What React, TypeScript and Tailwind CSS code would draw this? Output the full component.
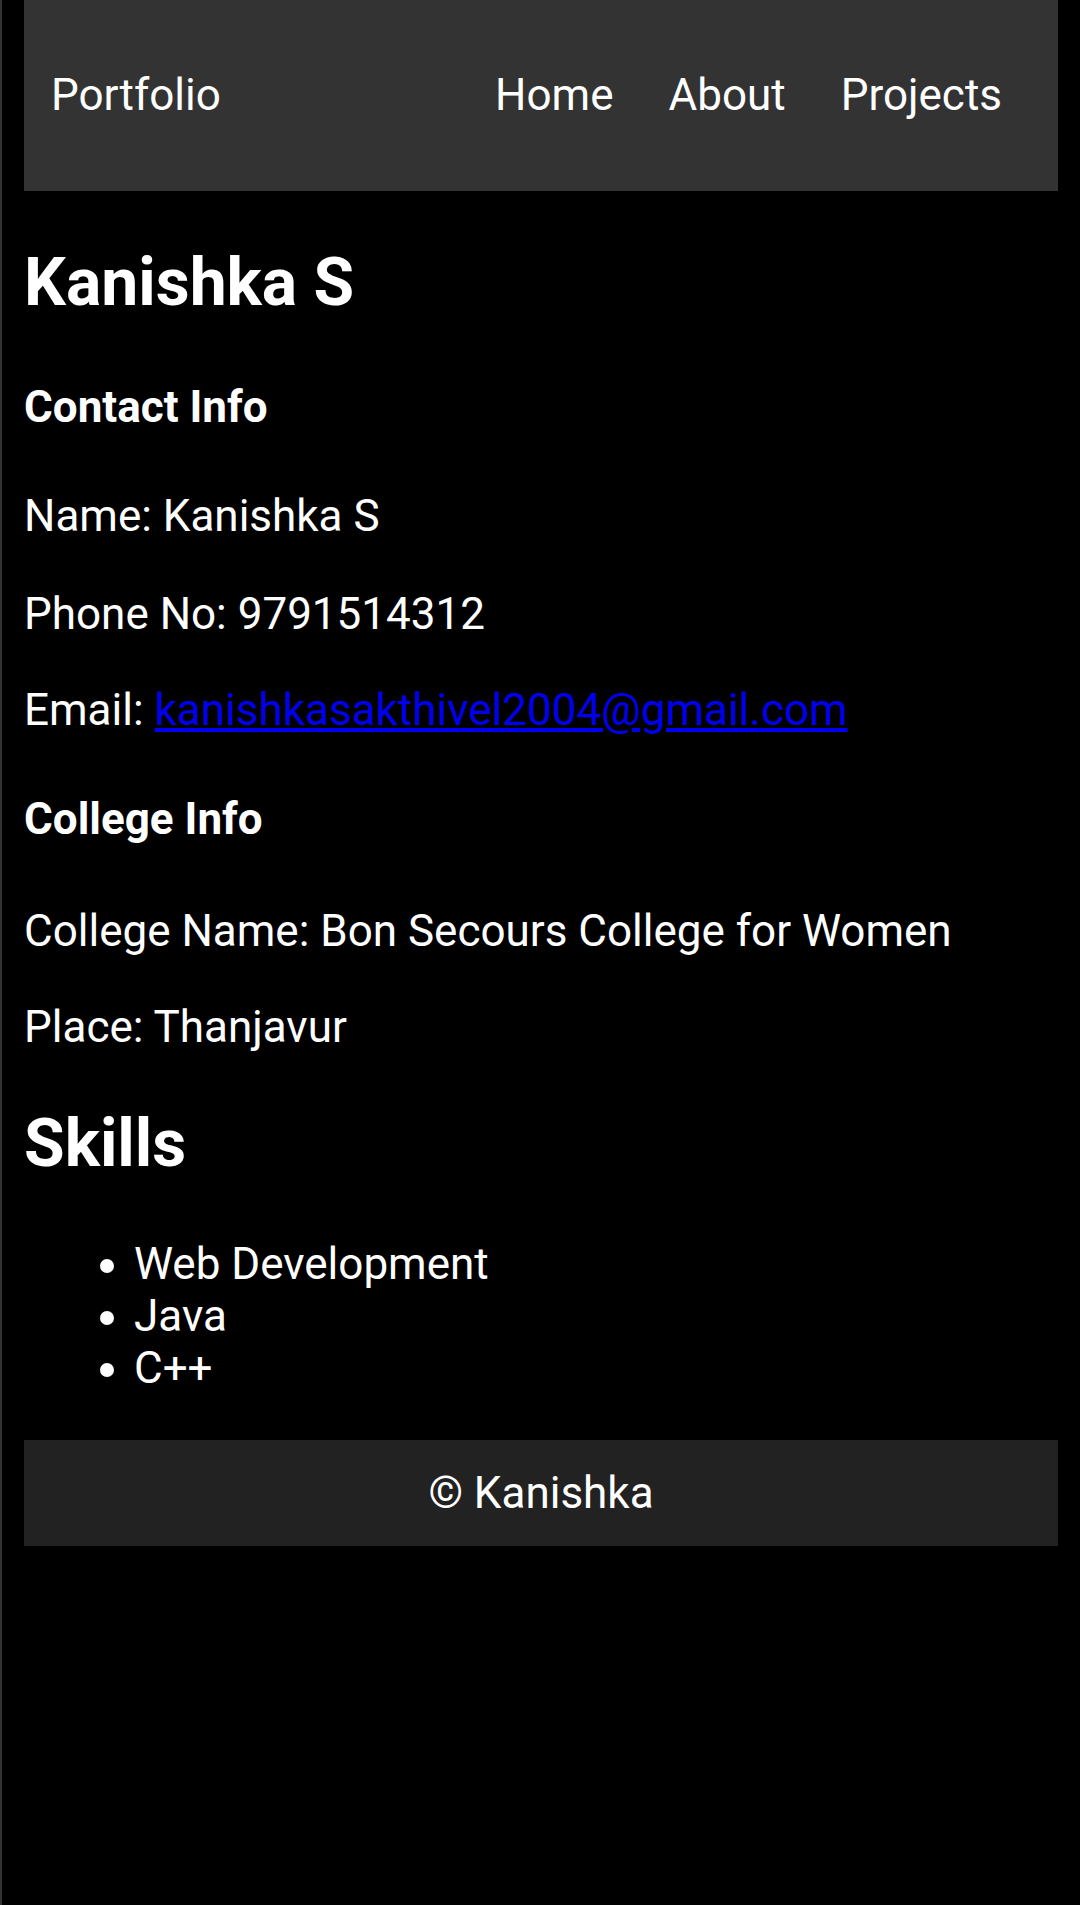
import React from "react";

const skills = ["Web Development", "Java", "C++"];

export default function App() {
  return (
    <div className="min-h-[1905px] bg-black text-white border-l-2 border-[#333333] px-[22px] font-['Roboto','Noto_Sans',sans-serif] text-[44px] leading-[52px]">
      <nav className="h-[191px] bg-[#333333] flex items-center justify-between pl-[27px] pr-[56px] pb-[2px]">
        <a href="#" className="text-white">
          Portfolio
        </a>
        <div className="flex gap-[55px]">
          <a href="#" className="text-white">Home</a>
          <a href="#" className="text-white">About</a>
          <a href="#" className="text-white">Projects</a>
        </div>
      </nav>

      <h2 className="mt-[53px] text-[66px] font-bold leading-[77px]">Kanishka S</h2>

      <h4 className="mt-[60px] font-bold">Contact Info</h4>
      <p className="mt-[57px]">Name: Kanishka S</p>
      <p className="mt-[46px]">Phone No: 9791514312</p>
      <p className="mt-[44px]">
        Email:{" "}
        <a href="mailto:kanishkasakthivel2004@gmail.com" className="text-[#0000ee] underline">
          kanishkasakthivel2004@gmail.com
        </a>
      </p>

      <h4 className="mt-[57px] font-bold">College Info</h4>
      <p className="mt-[60px]">College Name: Bon Secours College for Women</p>
      <p className="mt-[44px]">Place: Thanjavur</p>

      <h2 className="mt-[52px] text-[66px] font-bold leading-[77px]">Skills</h2>
      <ul className="mt-[56px] list-disc pl-[110px]">
        {skills.map((s) => (
          <li key={s}>{s}</li>
        ))}
      </ul>

      <footer className="mt-[46px] bg-[#222222] py-[27px] text-center">© Kanishka</footer>
    </div>
  );
}
